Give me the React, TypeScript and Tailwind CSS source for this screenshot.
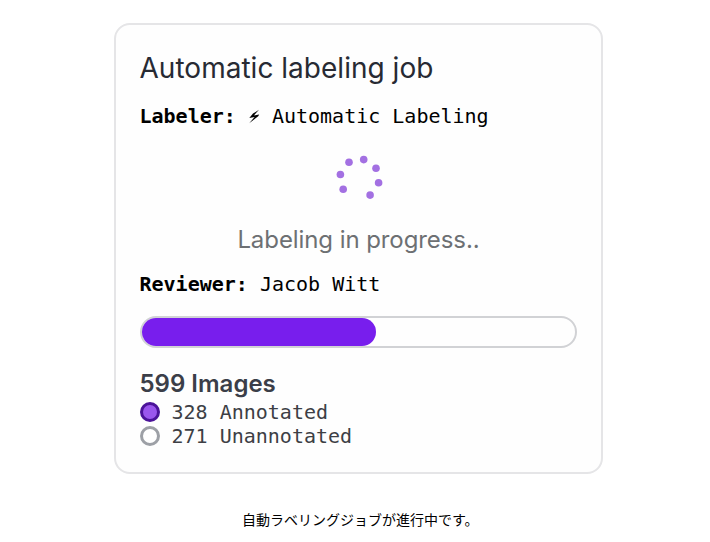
const dots = [
  [28.7, 8.6], [41, 17.3], [43.6, 31.8], [35.1, 44.1], [8.2, 38.3], [5.4, 23.5], [14, 11.2],
];

function Bolt() {
  return (
    <svg className="h-5 w-3 shrink-0" viewBox="0 0 12 20" fill="currentColor">
      <path d="M11 3.8 5 7.6 1.3 11.9 6.6 10.9 1.2 17.2 10.2 10.3 11.2 8.5 5.9 9.4Z" />
    </svg>
  );
}

function Legend({ ring, fill, label }: { ring: string; fill: string; label: string }) {
  return (
    <li className="flex h-6 items-center gap-[11.5px]">
      <span className={`size-5 rounded-full border-[3px] ${ring} ${fill}`} />
      <span>{label}</span>
    </li>
  );
}

export default function App() {
  return (
    <main className="flex h-[542px] flex-col bg-white pt-[23px] font-['DejaVu_Sans_Mono',monospace] text-[20px] text-black">
      <section className="ml-[114px] flex h-[451px] w-[489px] flex-col rounded-[16px] border-2 border-[#e5e5e7] bg-[#fefefe] px-6">
        <h1 className="-ml-[0.5px] mt-[25px] h-9 whitespace-nowrap font-['Inter',sans-serif] text-[28px] leading-9 tracking-[0.02px] text-[#272a33]">Automatic labeling job</h1>
        <p className="-ml-[0.5px] mt-[18px] flex h-6 items-center whitespace-pre leading-6">
          <strong>{"Labeler: "}</strong>
          <Bolt />
          <span>{" Automatic Labeling"}</span>
        </p>
        <svg className="mt-[23px] ml-[195px] size-[52px] text-[#a370e2]" viewBox="0 0 52 52" fill="currentColor">
          {dots.map(([x, y]) => <circle key={x} cx={x} cy={y} r="3.8" />)}
        </svg>
        <p className="mt-[21px] h-8 text-center font-['Inter',sans-serif] text-[24px] leading-8 tracking-[-0.08px] text-[#6d7073]">Labeling in progress..</p>
        <p className="-ml-[0.5px] mt-4 h-6 whitespace-pre leading-6"><strong>Reviewer:</strong> Jacob Witt</p>
        <div className="mt-5 h-8 w-[437px] rounded-full border-2 border-[#d1d2d5]">
          <div className="h-full w-[234px] rounded-full bg-[#781eed]" />
        </div>
        <h2 className="-ml-[0.5px] mt-5 h-8 font-['Inter',sans-serif] text-[24px] font-semibold leading-8 text-[#3b3e48]">599 Images</h2>
        <ul className="whitespace-pre leading-6 text-[#3d3f45]">
          <Legend ring="border-[#4b1399]" fill="bg-[#9a56ed]" label="328 Annotated" />
          <Legend ring="border-[#9da0a6]" fill="bg-white" label="271 Unannotated" />
        </ul>
      </section>
      <p className="mt-[35px] ml-[242px] h-5 whitespace-nowrap font-['Noto_Sans_CJK_JP',sans-serif] text-[14px] leading-5">自動ラベリングジョブが進行中です。</p>
    </main>
  );
}
